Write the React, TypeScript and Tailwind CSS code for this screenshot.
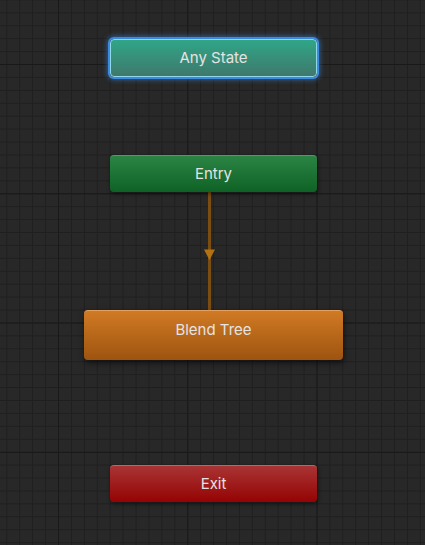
import React from 'react';

// Animator graph: state nodes on a grid canvas
type StateNode = {
  id: string;
  label: string;
  box: string;
  fill: string;
  text: string;
};

const nodes: StateNode[] = [
  {
    id: 'any',
    label: 'Any State',
    box: 'left-[110px] top-[39px] w-[207px] h-[38px]',
    fill: 'bg-[linear-gradient(to_bottom,#2fa687,#3f786c)] border border-[#8fd8e8] shadow-[0_0_0_2px_#3b8ae0,0_0_5px_3px_rgba(59,138,224,0.55)]',
    text: 'pt-[1px]',
  },
  {
    id: 'entry',
    label: 'Entry',
    box: 'left-[110px] top-[155px] w-[207px] h-[37px]',
    fill: 'bg-[linear-gradient(to_bottom,#2b8444,#0e6225)] border-t border-[#4f9d66] shadow-[1px_2px_4px_rgba(0,0,0,0.45)]',
    text: 'pt-[1px]',
  },
  {
    id: 'blend',
    label: 'Blend Tree',
    box: 'left-[84px] top-[310px] w-[259px] h-[50px]',
    fill: 'bg-[linear-gradient(to_bottom,#d07a24,#9e540f)] border-t border-[#e5a060] shadow-[1px_3px_6px_rgba(0,0,0,0.55)]',
    text: 'pb-[10px]',
  },
  {
    id: 'exit',
    label: 'Exit',
    box: 'left-[110px] top-[465px] w-[207px] h-[37px]',
    fill: 'bg-[linear-gradient(to_bottom,#a93434,#950303)] border-t border-[#c26262] shadow-[1px_2px_4px_rgba(0,0,0,0.45)]',
    text: 'pt-[1px]',
  },
];

function Transition() {
  return (
    <svg className="absolute left-0 top-0" width={425} height={545}>
      <line x1={209.5} y1={192} x2={209.5} y2={310} stroke="#7a4e12" strokeWidth={3} />
      <polygon points="204,249.5 215,249.5 209.5,260" fill="#b3720f" />
    </svg>
  );
}

export default function App() {
  return (
    <div
      className="relative w-[425px] h-[545px] overflow-hidden bg-[#282828] font-['Inter','Liberation_Sans',sans-serif]
        bg-[linear-gradient(to_right,#191919_1px,transparent_1px),linear-gradient(to_bottom,#191919_1px,transparent_1px),linear-gradient(to_right,#1f1f1f_1px,transparent_1px),linear-gradient(to_bottom,#1f1f1f_1px,transparent_1px)]
        bg-[size:129.3px_129.3px,129.3px_129.3px,12.93px_12.93px,12.93px_12.93px]
        bg-[position:58px_64px,58px_64px,58px_64px,58px_64px]"
    >
      <Transition />
      {nodes.map((n) => (
        <div
          key={n.id}
          className={`absolute ${n.box} ${n.fill} rounded-[4px] flex items-center justify-center`}
        >
          <span className={`text-[15px] text-[#e4e4e4] ${n.text}`}>{n.label}</span>
        </div>
      ))}
    </div>
  );
}
